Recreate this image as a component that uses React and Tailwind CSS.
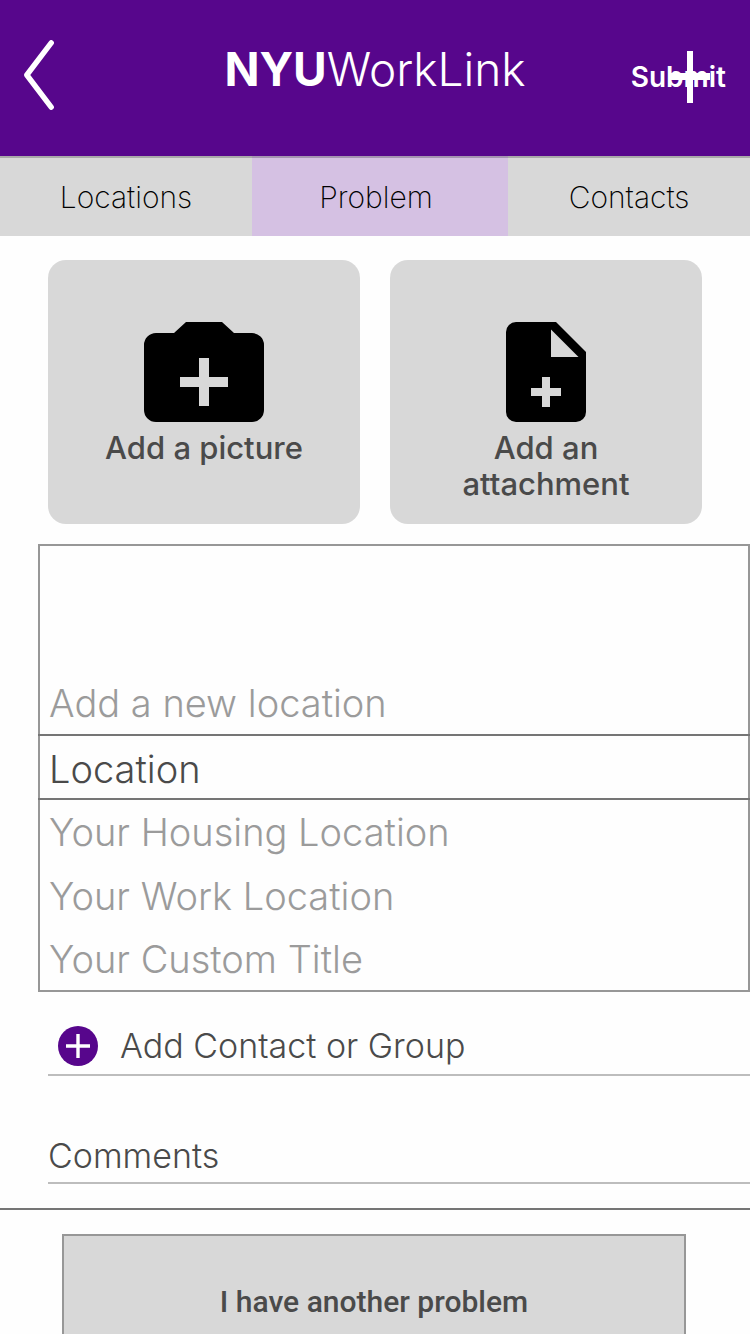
import { useState } from "react";

const LOCATIONS = [
  "Add a new location",
  "Location",
  "Your Housing Location",
  "Your Work Location",
  "Your Custom Title",
];

function Header() {
  return (
    <header className="grid h-[156px] grid-cols-[1fr_auto_1fr] items-center bg-[#57068c] px-6 pb-1.5 text-white">
      <button type="button" aria-label="Back" className="justify-self-start">
        <svg viewBox="0 0 30 70" className="block h-[70px] w-[30px]" fill="none" stroke="currentColor" strokeWidth="5.4" strokeLinecap="round" strokeLinejoin="round">
          <path d="M27.2 2.8 L2.8 35 L27.2 67.2" />
        </svg>
      </button>
      <h1 className="pb-3 text-[46px] leading-[52px] font-light">
        <span className="font-bold">NYU</span>WorkLink
      </h1>
      <div className="relative justify-self-end pt-1">
        <button type="button" className="block text-[28px] leading-8 font-semibold">
          Submit
        </button>
        <button type="button" aria-label="Add" className="absolute -top-4 -bottom-5 right-4 flex items-center">
          <svg viewBox="0 0 40 52" className="block h-[52px] w-10" fill="currentColor">
            <path d="M17 0h6v52h-6z M0 22h40v7H0z" />
          </svg>
        </button>
      </div>
    </header>
  );
}

function Tabs() {
  const tab = "flex h-20 items-center justify-center border-t-2 text-[30px] leading-9 font-extralight text-black";
  return (
    <nav className="grid grid-cols-[252fr_256fr_242fr]">
      <button type="button" className={`${tab} border-[#a9a9a9] bg-[#d8d8d8]`}>Locations</button>
      <button type="button" aria-current="page" className={`${tab} border-[#a594b1] bg-[#d5c1e3] pr-2`}>Problem</button>
      <button type="button" className={`${tab} border-[#a9a9a9] bg-[#d8d8d8]`}>Contacts</button>
    </nav>
  );
}

function Card({ icon, children }) {
  return (
    <button type="button" className="flex h-[264px] flex-1 flex-col items-center gap-2 rounded-[18px] bg-[#d8d8d8] px-12 pt-[62px] text-[31px] leading-9 font-medium text-[#4a4a4a]">
      {icon}
      <span>{children}</span>
    </button>
  );
}

function CameraIcon() {
  return (
    <svg viewBox="0 0 120 100" className="block h-[100px] w-[120px] shrink-0 text-black" fill="currentColor" fillRule="evenodd">
      <path d="M42 0H78L90 11H108A12 12 0 0 1 120 23V88A12 12 0 0 1 108 100H12A12 12 0 0 1 0 88V23A12 12 0 0 1 12 11H30Z M55 36V55H36V65H55V84H65V65H84V55H65V36Z" />
    </svg>
  );
}

function FileIcon() {
  return (
    <svg viewBox="0 0 80 100" className="block h-[100px] w-20 shrink-0 text-black" fill="currentColor" fillRule="evenodd">
      <path d="M10 0H50L80 30V90A10 10 0 0 1 70 100H10A10 10 0 0 1 0 90V10A10 10 0 0 1 10 0Z M45 7.5V35H72.5Z M36 55V66H25V74H36V85H44V74H55V66H44V55Z" />
    </svg>
  );
}

function LocationPicker() {
  const [selected, setSelected] = useState("Location");
  return (
    <fieldset aria-label="Choose a location" className="mt-5 ml-[38px] border-2 border-[#979797] pt-[126px] text-[38px] leading-10 font-light">
      {LOCATIONS.map((name) => (
        <label
          key={name}
          className={
            name === selected
              ? "relative -mx-0.5 flex h-[66px] items-center border-y-2 border-[#757575] px-[11px] pt-1 text-[#4a4a4a]"
              : "relative flex h-16 items-center px-[9px] text-[#9b9b9b] first:h-[62px] last:h-[62px]"
          }
        >
          <input type="radio" name="location" value={name} checked={name === selected} onChange={() => setSelected(name)} className="sr-only" />
          {name}
        </label>
      ))}
    </fieldset>
  );
}

export default function App() {
  return (
    <div className="min-h-screen bg-[#fefefe] font-['Inter','Liberation_Sans',sans-serif] text-[#4a4a4a]">
      <Header />
      <Tabs />
      <main>
        <div className="flex gap-[30px] px-12 pt-6">
          <Card icon={<CameraIcon />}>Add a picture</Card>
          <Card icon={<FileIcon />}>Add an attachment</Card>
        </div>
        <LocationPicker />
        <button type="button" className="mt-6 ml-12 flex h-[60px] w-[calc(100%-48px)] items-center border-b-2 border-[#bdbdbd] pt-0.5 pl-2.5 text-left text-[34px] leading-10 font-light">
          <svg viewBox="0 0 40 40" className="mr-[22px] block size-10 shrink-0">
            <circle cx="20" cy="20" r="20" fill="#57068c" />
            <path d="M20 8V32M8 20H32" stroke="#fff" strokeWidth="3.4" />
          </svg>
          Add Contact or Group
        </button>
        <div className="mt-[54px] ml-12 border-b-2 border-[#bdbdbd] pb-0.5">
          <input type="text" aria-label="Comments" placeholder="Comments" className="block h-[50px] w-full bg-transparent text-[34px] leading-10 font-light outline-none placeholder:text-[#4a4a4a]" />
        </div>
      </main>
      <footer className="mt-6 border-t-2 border-[#757575] pt-6 pr-16 pl-[62px]">
        <button type="button" className="block h-[136px] w-full border-2 border-[#979797] bg-[#d8d8d8] font-['Roboto',sans-serif] text-[30px] leading-9 font-medium">
          I have another problem
        </button>
      </footer>
    </div>
  );
}
